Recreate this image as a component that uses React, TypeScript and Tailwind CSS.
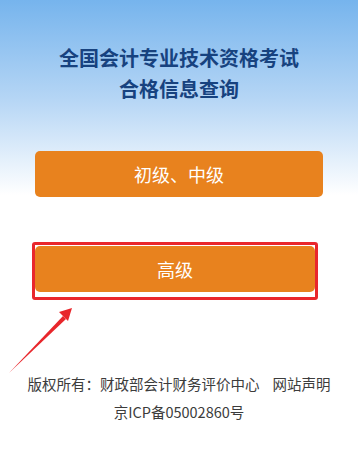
import React from "react";

export default function App() {
  const font = { fontFamily: '"Noto Sans CJK SC", "Noto Sans", sans-serif' };
  return (
    <div
      className="relative w-[358px] h-[453px] overflow-hidden bg-[linear-gradient(to_bottom,#76b4ed_0px,#b6d6f5_100px,#ffffff_195px,#ffffff_100%)]"
      style={font}
    >
      <div className="pt-[42px] text-center text-[20px] leading-[31px] font-bold text-[#17427f]">
        <div>全国会计专业技术资格考试</div>
        <div>合格信息查询</div>
      </div>
      <div className="mt-[47px] mx-[35px] h-[46px] rounded-[5px] bg-[#e8821e] flex items-center justify-center text-white text-[18px]">
        初级、中级
      </div>
      <div className="mt-[45px] ml-[32px] w-[286px] border-[3px] border-[#e9272c] rounded-[3px] pt-[1px] pb-[5px]">
        <div className="mx-0 h-[46px] rounded-[5px] bg-[#e8821e] flex items-center justify-center text-white text-[18px]">
          高级
        </div>
      </div>
      <div className="mt-[70px] text-center text-[14.5px] leading-[28px] text-[#3c3c3c]">
        <div>
          版权所有：财政部会计财务评价中心<span className="inline-block w-[13px]"></span>网站声明
        </div>
        <div>京ICP备05002860号</div>
      </div>
      <svg className="absolute left-0 top-0" width="358" height="453" viewBox="0 0 358 453">
        <polygon points="9,373 63,316 66,319" fill="#e8262b" />
        <polygon points="72,308 59,312 68,321" fill="#e8262b" />
      </svg>
    </div>
  );
}
